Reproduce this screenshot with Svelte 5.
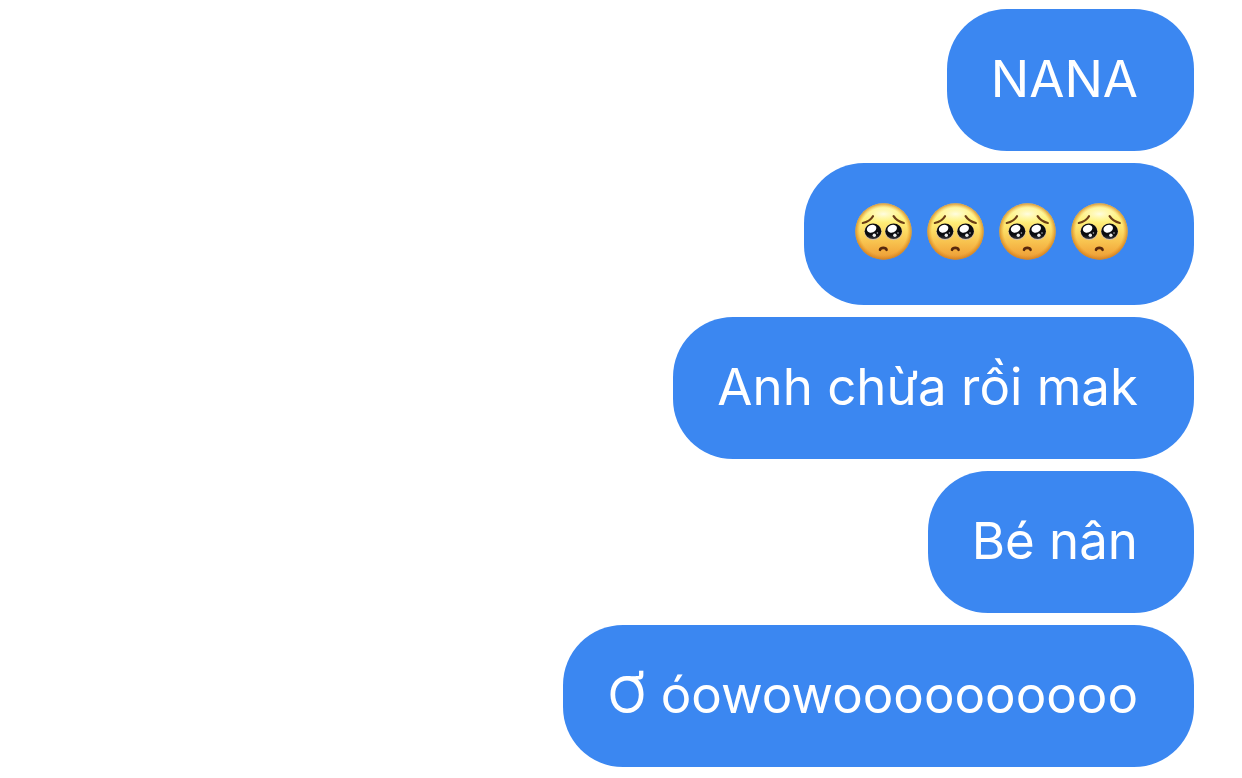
<script>
  const messages = [
    { text: 'NANA' },
    { faces: 4 },
    { text: 'Anh chừa rồi mak' },
    { text: 'Bé nân' },
    { text: 'Ơ óowowoooooooooo' },
  ];
</script>

<svelte:head><title>Chat</title></svelte:head>

<svg class="defs" aria-hidden="true">
  <defs>
    <linearGradient id="skin" x1="0" y1="0" x2="0" y2="1">
      <stop offset="0" stop-color="#fff7a0" />
      <stop offset="0.3" stop-color="#fff27e" />
      <stop offset="0.55" stop-color="#fbd45c" />
      <stop offset="0.85" stop-color="#f3ad3f" />
      <stop offset="1" stop-color="#e89a38" />
    </linearGradient>
    <radialGradient id="rim" cx="0.5" cy="0.5" r="0.5">
      <stop offset="0.84" stop-color="#e48a1c" stop-opacity="0" />
      <stop offset="1" stop-color="#c9781c" stop-opacity="0.75" />
    </radialGradient>
    <radialGradient id="shine" cx="0.5" cy="0.5" r="0.5">
      <stop offset="0" stop-color="#fffef0" stop-opacity="0.85" />
      <stop offset="1" stop-color="#fff9b0" stop-opacity="0" />
    </radialGradient>
    <linearGradient id="eye" x1="0" y1="0" x2="0" y2="1">
      <stop offset="0" stop-color="#08090d" />
      <stop offset="0.75" stop-color="#0b0c10" />
      <stop offset="1" stop-color="#35363c" />
    </linearGradient>
    <symbol id="pleading" viewBox="0 0 57 57">
      <circle cx="28.5" cy="28.5" r="28.2" fill="url(#skin)" />
      <circle cx="28.5" cy="28.5" r="28.2" fill="url(#rim)" />
      <ellipse cx="28.5" cy="11" rx="20" ry="9" fill="url(#shine)" />
      <path d="M7.8 20 Q15 18.3 18 13.2" fill="none" stroke="#6b3d15" stroke-width="2.2" stroke-linecap="round" />
      <path d="M48.8 20 Q41.8 18.3 38.6 13.2" fill="none" stroke="#6b3d15" stroke-width="2.2" stroke-linecap="round" />
      <ellipse cx="18" cy="29" rx="8.7" ry="8.3" fill="#d6bd9e" />
      <ellipse cx="38.6" cy="29" rx="8.7" ry="8.3" fill="#d6bd9e" />
      <ellipse cx="18" cy="28.2" rx="8.3" ry="7.7" fill="url(#eye)" />
      <ellipse cx="38.6" cy="28.2" rx="8.3" ry="7.7" fill="url(#eye)" />
      <ellipse cx="16.6" cy="25.7" rx="4.9" ry="3.8" transform="rotate(-22 16.6 25.7)" fill="#fff" />
      <ellipse cx="37.2" cy="25.7" rx="4.9" ry="3.8" transform="rotate(-22 37.2 25.7)" fill="#fff" />
      <circle cx="19.3" cy="32.2" r="1.7" fill="#eee" />
      <circle cx="39.9" cy="32.2" r="1.7" fill="#eee" />
      <circle cx="22.4" cy="30" r="0.8" fill="#b9bac0" />
      <circle cx="43" cy="30" r="0.8" fill="#b9bac0" />
      <path d="M25 46.8 Q25.6 44.9 28.3 44.9 Q31 44.9 31.6 46.8" fill="none" stroke="#57280d" stroke-width="2.6" stroke-linecap="round" />
    </symbol>
  </defs>
</svg>

<main class="thread">
  {#each messages as message}
    <div class="bubble">
      {#if message.faces}
        <div class="faces">
          {#each Array(message.faces) as _}
            <svg class="face" role="img" aria-label="🥺"><use href="#pleading" /></svg>
          {/each}
        </div>
      {:else}
        <p>{message.text}</p>
      {/if}
    </div>
  {/each}
</main>

<style>
  :global(body) {
    margin: 0;
    background: #fff;
  }

  .defs {
    position: absolute;
    width: 0;
    height: 0;
  }

  .thread {
    display: flex;
    flex-direction: column;
    align-items: flex-end;
    gap: 12px;
    padding: 9px 48px 11px;
    font-family: Inter, "Liberation Sans", sans-serif;
  }

  .bubble {
    box-sizing: border-box;
    padding: 38px 56px 40px 44px;
    border-radius: 60px;
    background: #3b87f1;
    color: #fff;
  }

  p {
    margin: 0;
    font-size: 51px;
    font-weight: 400;
    line-height: 64px;
  }

  .faces {
    display: flex;
    align-items: center;
    gap: 15px;
    height: 64px;
    padding: 0 10px 4px 7px;
    box-sizing: border-box;
  }

  .face {
    width: 57px;
    height: 57px;
  }
</style>
